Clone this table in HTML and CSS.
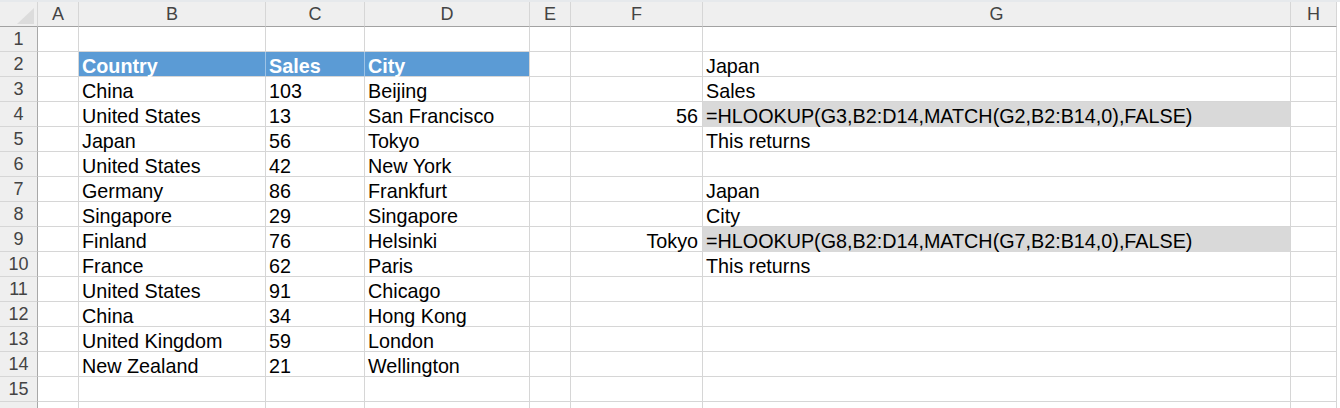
FILE: index.html
```html
<!DOCTYPE html>
<html>
<head>
<meta charset="utf-8">
<link rel="stylesheet" href="styles.css">
</head>
<body>
<div class="sheet">
  <div class="strip"></div>
  <div class="row hdr">
    <div class="c corner"><svg width="37" height="24" viewBox="0 0 37 24"><polygon points="34,6 34,22 17,22" fill="#dcdcdc"/></svg></div>
    <div class="c">A</div><div class="c">B</div><div class="c">C</div><div class="c">D</div><div class="c">E</div><div class="c">F</div><div class="c">G</div><div class="c">H</div>
  </div>
  <div class="row"><div class="c rh">1</div><div class="c"></div><div class="c"></div><div class="c"></div><div class="c"></div><div class="c"></div><div class="c"></div><div class="c"></div><div class="c"></div></div>
  <div class="row"><div class="c rh">2</div><div class="c"></div><div class="c th">Country</div><div class="c th">Sales</div><div class="c th last">City</div><div class="c"></div><div class="c"></div><div class="c">Japan</div><div class="c"></div></div>
  <div class="row"><div class="c rh">3</div><div class="c"></div><div class="c">China</div><div class="c">103</div><div class="c">Beijing</div><div class="c"></div><div class="c"></div><div class="c">Sales</div><div class="c"></div></div>
  <div class="row"><div class="c rh">4</div><div class="c"></div><div class="c">United States</div><div class="c">13</div><div class="c">San Francisco</div><div class="c"></div><div class="c num">56</div><div class="c hl">=HLOOKUP(G3,B2:D14,MATCH(G2,B2:B14,0),FALSE)</div><div class="c"></div></div>
  <div class="row"><div class="c rh">5</div><div class="c"></div><div class="c">Japan</div><div class="c">56</div><div class="c">Tokyo</div><div class="c"></div><div class="c"></div><div class="c">This returns</div><div class="c"></div></div>
  <div class="row"><div class="c rh">6</div><div class="c"></div><div class="c">United States</div><div class="c">42</div><div class="c">New York</div><div class="c"></div><div class="c"></div><div class="c"></div><div class="c"></div></div>
  <div class="row"><div class="c rh">7</div><div class="c"></div><div class="c">Germany</div><div class="c">86</div><div class="c">Frankfurt</div><div class="c"></div><div class="c"></div><div class="c">Japan</div><div class="c"></div></div>
  <div class="row"><div class="c rh">8</div><div class="c"></div><div class="c">Singapore</div><div class="c">29</div><div class="c">Singapore</div><div class="c"></div><div class="c"></div><div class="c">City</div><div class="c"></div></div>
  <div class="row"><div class="c rh">9</div><div class="c"></div><div class="c">Finland</div><div class="c">76</div><div class="c">Helsinki</div><div class="c"></div><div class="c num">Tokyo</div><div class="c hl">=HLOOKUP(G8,B2:D14,MATCH(G7,B2:B14,0),FALSE)</div><div class="c"></div></div>
  <div class="row"><div class="c rh">10</div><div class="c"></div><div class="c">France</div><div class="c">62</div><div class="c">Paris</div><div class="c"></div><div class="c"></div><div class="c">This returns</div><div class="c"></div></div>
  <div class="row"><div class="c rh">11</div><div class="c"></div><div class="c">United States</div><div class="c">91</div><div class="c">Chicago</div><div class="c"></div><div class="c"></div><div class="c"></div><div class="c"></div></div>
  <div class="row"><div class="c rh">12</div><div class="c"></div><div class="c">China</div><div class="c">34</div><div class="c">Hong Kong</div><div class="c"></div><div class="c"></div><div class="c"></div><div class="c"></div></div>
  <div class="row"><div class="c rh">13</div><div class="c"></div><div class="c">United Kingdom</div><div class="c">59</div><div class="c">London</div><div class="c"></div><div class="c"></div><div class="c"></div><div class="c"></div></div>
  <div class="row"><div class="c rh">14</div><div class="c"></div><div class="c">New Zealand</div><div class="c">21</div><div class="c">Wellington</div><div class="c"></div><div class="c"></div><div class="c"></div><div class="c"></div></div>
  <div class="row"><div class="c rh">15</div><div class="c"></div><div class="c"></div><div class="c"></div><div class="c"></div><div class="c"></div><div class="c"></div><div class="c"></div><div class="c"></div></div>
  <div class="row"><div class="c rh"></div><div class="c"></div><div class="c"></div><div class="c"></div><div class="c"></div><div class="c"></div><div class="c"></div><div class="c"></div><div class="c"></div></div>
</div>
</body>
</html>
```
FILE: styles.css
```css
html, body {
  margin: 0;
  padding: 0;
  background: #ffffff;
  overflow: hidden;
  height: 408px;
}
.sheet {
  display: flex;
  flex-direction: column;
  font-family: "Liberation Sans", Arial, sans-serif;
}
.strip {
  height: 2px;
  background: #e6e9ec;
}
.row {
  display: grid;
  grid-template-columns: 38px 41px 187px 99px 165px 41px 132px 588px 46px;
  height: 25px;
  flex: none;
}
.c {
  box-sizing: border-box;
  height: 25px;
  border-right: 1px solid #d6d6d6;
  border-bottom: 1px solid #d6d6d6;
  padding: 4px 4px 0 3px;
  line-height: 20px;
  font-size: 19.75px;
  color: #000;
  white-space: nowrap;
}
.hdr .c {
  background: #efefef;
  color: #444;
  font-size: 18px;
  text-align: center;
  padding: 0;
  line-height: 24px;
  border-bottom: 1px solid #a2a2a2;
}
.hdr .corner {
  padding: 0;
  display: flex;
}
.rh {
  background: #efefef;
  color: #444;
  font-size: 18px !important;
  text-align: center;
  padding: 0 !important;
  line-height: 25px !important;
  border-right: 1px solid #a8a8a8 !important;
}
.th {
  background: #5b9bd5;
  color: #ffffff;
  font-weight: bold;
  border-right-color: #9dc3e6;
}
.th.last {
  border-right-color: #d6d6d6;
}
.num {
  text-align: right;
  padding-right: 4px;
}
.hl {
  background: #d9d9d9;
  border-bottom-color: #d9d9d9;
}
```
